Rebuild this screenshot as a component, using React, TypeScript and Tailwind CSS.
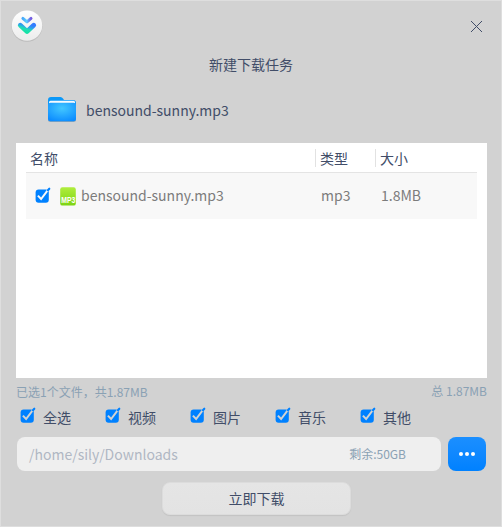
import React from "react";

function CheckMark({ label, tick = "#d2d2d2" }: { label: string; tick?: string }) {
  return (
    <svg role="checkbox" aria-checked="true" aria-label={label} width="16" height="17" viewBox="0 0 16 17" className="block shrink-0">
      <rect x="0.6" y="2.6" width="13.2" height="13.2" rx="3" fill="#0081ff" />
      <path d="M2.9 8.6 L6.1 12 L13.4 2.4" fill="none" stroke={tick} strokeWidth="2" />
      <path d="M12.9 3.2 L14.3 1.7" fill="none" stroke="#0081ff" strokeWidth="2.1" strokeLinecap="round" />
    </svg>
  );
}

function Logo() {
  return (
    <svg width="34" height="34" viewBox="0 0 34 34" className="block">
      <defs>
        <linearGradient id="disc" x1="0" y1="0" x2="0" y2="1">
          <stop offset="0" stopColor="#ffffff" />
          <stop offset="1" stopColor="#ececec" />
        </linearGradient>
        <linearGradient id="small" x1="0" y1="0" x2="1" y2="0">
          <stop offset="0" stopColor="#48a8fa" />
          <stop offset="0.45" stopColor="#5ccfff" />
          <stop offset="1" stopColor="#7457e0" />
        </linearGradient>
        <linearGradient id="large" x1="0.15" y1="1" x2="0.85" y2="0">
          <stop offset="0" stopColor="#14e3a4" />
          <stop offset="0.4" stopColor="#20dcb4" />
          <stop offset="0.65" stopColor="#2ba6e8" />
          <stop offset="1" stopColor="#347cff" />
        </linearGradient>
      </defs>
      <circle cx="17" cy="17.3" r="15.4" fill="#bcbcbc" />
      <circle cx="17" cy="16.6" r="15.2" fill="url(#disc)" />
      <path d="M12.9 9.4 L17 12.9 L21 9.4" fill="none" stroke="url(#small)" strokeWidth="3" strokeLinecap="round" strokeLinejoin="round" />
      <path d="M10.3 16.2 L17 22.5 L23.7 16.2" fill="none" stroke="url(#large)" strokeWidth="4.8" strokeLinecap="round" strokeLinejoin="round" />
    </svg>
  );
}

function Folder() {
  return (
    <svg width="30" height="28" viewBox="0 0 30 28" className="block shrink-0">
      <defs>
        <radialGradient id="front" cx="0.5" cy="0.3" r="0.75">
          <stop offset="0" stopColor="#43c7ff" />
          <stop offset="1" stopColor="#0c8cff" />
        </radialGradient>
      </defs>
      <path d="M1 4 Q1 1 4 1 H13.5 Q15 1 16 2.5 L17 4 H26 Q29 4 29 7 V20 H1Z" fill="#0b98f8" />
      <path d="M2 9 V6.2 Q2 4.7 3.5 4.7 H26.5 Q28 4.7 28 6.2 V9Z" fill="#f7fbff" />
      <rect x="1" y="8" width="28" height="18" rx="2.5" fill="#8fa5b5" />
      <rect x="1" y="6.8" width="28" height="18.4" rx="2.5" fill="url(#front)" />
    </svg>
  );
}

function Mp3Icon() {
  return (
    <svg width="16" height="19" viewBox="0 0 16 19" className="block shrink-0 overflow-visible">
      <defs>
        <linearGradient id="sheet" x1="0" y1="0" x2="0" y2="1">
          <stop offset="0" stopColor="#b0ed3d" />
          <stop offset="1" stopColor="#7cd413" />
        </linearGradient>
      </defs>
      <rect x="0.2" y="0.2" width="15.6" height="18.4" rx="2.2" fill="url(#sheet)" />
      <text transform="translate(1.3 16.4) scale(0.8 1)" x="0" y="0" fontSize="9" fontWeight="700" fontFamily="Liberation Sans, sans-serif" textLength="17.5" lengthAdjust="spacingAndGlyphs" fill="#fff">MP3</text>
    </svg>
  );
}

const filters = ["全选", "视频", "图片", "音乐", "其他"];

export default function App() {
  return (
    <main className="flex h-[527px] w-[502px] flex-col overflow-hidden border border-[#dedede] bg-[#d2d2d2] px-[15px] pt-[8px] font-['Noto_Sans_CJK_SC',sans-serif] text-[14px] text-[#414d68]">
      <header className="-ml-[6px] flex h-[34px] justify-between">
        <Logo />
        <button aria-label="关闭" className="mt-[11px] mr-[3px] h-[13px] w-[13px]">
          <svg width="13" height="13" viewBox="0 0 13 13" className="block">
            <path d="M1 1 L12 12 M12 1 L1 12" stroke="#414d68" strokeWidth="1" />
          </svg>
        </button>
      </header>
      <h1 className="mt-[11px] h-[20px] text-center leading-[20px]">新建下载任务</h1>
      <div className="mt-[22px] ml-[31px] flex h-[28px] items-center gap-[9px]">
        <Folder />
        <span className="leading-[28px]">bensound-sunny.mp3</span>
      </div>
      <section className="mt-[19px] h-[235px] w-[471px] shrink-0 bg-white px-[10px]">
        <div className="flex h-[30px] items-center border-b border-[#e4e4e4] leading-[20px]">
          <span className="w-[289px] pt-px pl-[4px]">名称</span>
          <span className="flex h-[18px] w-[60px] items-center border-l border-[#e2e2e2] pt-px pl-[4px]">类型</span>
          <span className="flex h-[18px] items-center border-l border-[#e2e2e2] pt-px pl-[4px]">大小</span>
        </div>
        <div className="flex h-[46px] items-center bg-[#f8f8f8] pb-[2px] leading-[20px] text-[#7c7c7c]">
          <div className="flex h-[20px] w-[295px] pl-[9px]">
            <div className="mt-[2px]"><CheckMark label="bensound-sunny.mp3" tick="#f8f8f8" /></div>
            <div className="mt-[2px] ml-[9px]"><Mp3Icon /></div>
            <span className="ml-[5px]">bensound-sunny.mp3</span>
          </div>
          <span className="w-[60px]">mp3</span>
          <span>1.8MB</span>
        </div>
      </section>
      <div className="mt-[3px] flex h-[21px] w-[471px] justify-between text-[12px] text-[#8aa1b4]">
        <span className="pt-px leading-[20px]">已选1个文件，共1.87MB</span>
        <span className="leading-[20px]">总 1.87MB</span>
      </div>
      <div className="mt-[4px] ml-[4px] flex h-[22px] items-center">
        {filters.map((f) => (
          <label key={f} className="flex h-[22px] w-[85px] items-start gap-[7px]">
            <span className="pt-px"><CheckMark label={f} /></span>
            <span className="leading-[22px]">{f}</span>
          </label>
        ))}
      </div>
      <div className="mt-[9px] ml-px flex h-[34px] gap-[7px]">
        <div className="flex w-[424px] items-center justify-between rounded-[8px] bg-[#efefef] pr-[35px] pl-[12px]">
          <span className="text-[#b0b7c3]">/home/sily/Downloads</span>
          <span className="text-[12px] text-[#8aa1b4]">剩余:50GB</span>
        </div>
        <button aria-label="选择目录" className="flex w-[38px] items-center justify-center gap-[1.5px] rounded-[8px] bg-linear-to-b from-[#1b8fff] to-[#0081ff]">
          <i className="size-[4.2px] rounded-full bg-white" />
          <i className="size-[4.2px] rounded-full bg-white" />
          <i className="size-[4.2px] rounded-full bg-white" />
        </button>
      </div>
      <button className="mt-[11px] ml-[146px] h-[33px] w-[189px] rounded-[8px] border border-[#dcdcdc] bg-linear-to-b from-[#e5e5e5] to-[#e3e3e3] text-center leading-[31px] shadow-[0_1px_1px_#c2c2c2]">立即下载</button>
    </main>
  );
}
